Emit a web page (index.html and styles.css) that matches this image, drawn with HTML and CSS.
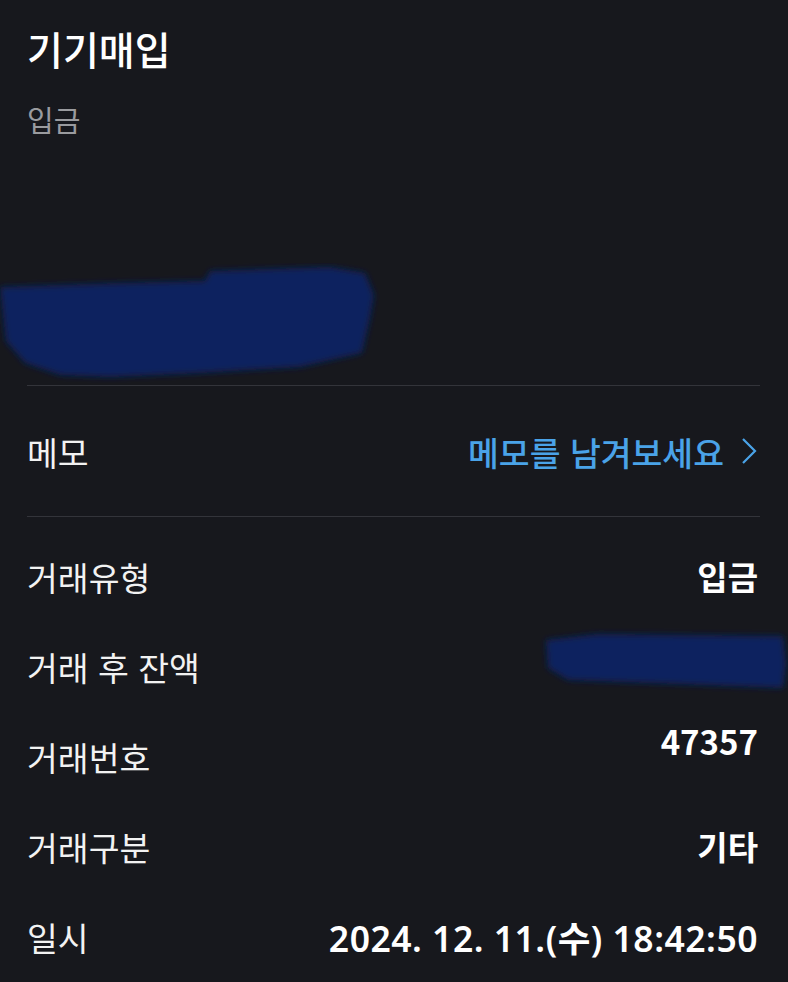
FILE: index.html
```html
<!DOCTYPE html>
<html lang="ko">
<head>
<meta charset="utf-8">
<link rel="stylesheet" href="styles.css">
</head>
<body>
<div class="page">
  <header class="head">
    <h1 class="title">기기매입</h1>
    <div class="sub">입금</div>
    <div class="amount">
      <svg class="blob" width="380" height="120" viewBox="0 0 380 120">
        <defs><filter id="bl" x="-10%" y="-20%" width="120%" height="140%"><feGaussianBlur stdDeviation="3"/></filter></defs>
        <path d="M0 24 L120 20 L205 18 L210 8 L330 4 L365 10 L374 32 L370 55 L362 90 L300 104 L200 110 L110 114 L60 112 L25 100 L6 78 Z" fill="#0c215f" filter="url(#bl)"/>
      </svg>
    </div>
  </header>
  <div class="divider"></div>
  <div class="memo">
    <span class="label">메모</span>
    <span class="memo-link">메모를 남겨보세요
      <svg class="chev" width="18" height="28" viewBox="0 0 18 28"><path d="M3 2 L15 14 L3 26" fill="none" stroke="#4aa3e8" stroke-width="2.2"/></svg>
    </span>
  </div>
  <div class="divider"></div>
  <div class="rows">
    <div class="row"><span class="label">거래유형</span><span class="value">입금</span></div>
    <div class="row"><span class="label">거래 후 잔액</span>
      <svg class="blob2" width="250" height="70" viewBox="0 0 250 70">
        <defs><filter id="bl2" x="-10%" y="-20%" width="120%" height="140%"><feGaussianBlur stdDeviation="3"/></filter></defs>
        <path d="M8 16 L60 10 L245 12 L248 40 L245 64 L140 60 L30 56 L10 44 Z" fill="#0c215f" filter="url(#bl2)"/>
      </svg>
    </div>
    <div class="row"><span class="label">거래번호</span><span class="value raised">47357</span></div>
    <div class="row"><span class="label">거래구분</span><span class="value">기타</span></div>
    <div class="row"><span class="label">일시</span><span class="value date">2024. 12. 11.(수) 18:42:50</span></div>
  </div>
</div>
</body>
</html>
```
FILE: styles.css
```css
html, body {
  margin: 0;
  padding: 0;
  background: #17181d;
}
body {
  font-family: "Noto Sans CJK KR", "Noto Sans", sans-serif;
  color: #f2f2f2;
  overflow: hidden;
}
.page {
  width: 788px;
  height: 982px;
  overflow: hidden;
}
.head {
  padding: 23px 0 0 0;
}
.title {
  margin: 0 0 0 27px;
  font-size: 39px;
  font-weight: 500;
  line-height: 50px;
  color: #ffffff;
}
.sub {
  margin: 26px 0 0 27px;
  font-size: 29px;
  line-height: 40px;
  color: #9a9b9f;
}
.amount {
  height: 246px;
  display: flex;
  align-items: flex-end;
}
.blob {
  display: block;
  margin-bottom: 2px;
}
.divider {
  height: 1px;
  background: #33343a;
  margin: 0 28px 0 27px;
}
.memo {
  height: 130px;
  display: flex;
  align-items: center;
  justify-content: space-between;
  padding: 0 30px 0 27px;
}
.label {
  font-size: 33.5px;
  font-weight: 400;
  color: #f2f2f2;
}
.memo-link {
  display: flex;
  align-items: center;
  gap: 16px;
  font-size: 33.5px;
  font-weight: 500;
  color: #4aa3e8;
}
.chev {
  display: block;
}
.rows {
  padding-top: 14px;
}
.row {
  height: 90px;
  display: flex;
  align-items: center;
  justify-content: space-between;
  padding: 0 30px 0 27px;
}
.value {
  font-size: 33px;
  font-weight: 600;
  color: #ffffff;
}
.date {
  font-family: "Noto Sans", "Noto Sans CJK KR", sans-serif;
  font-size: 35.5px;
  font-weight: 600;
  letter-spacing: 0.5px;
}
.raised {
  margin-bottom: 30px;
}
.blob2 {
  display: block;
  margin-right: -30px;
  margin-top: -14px;
}
```
